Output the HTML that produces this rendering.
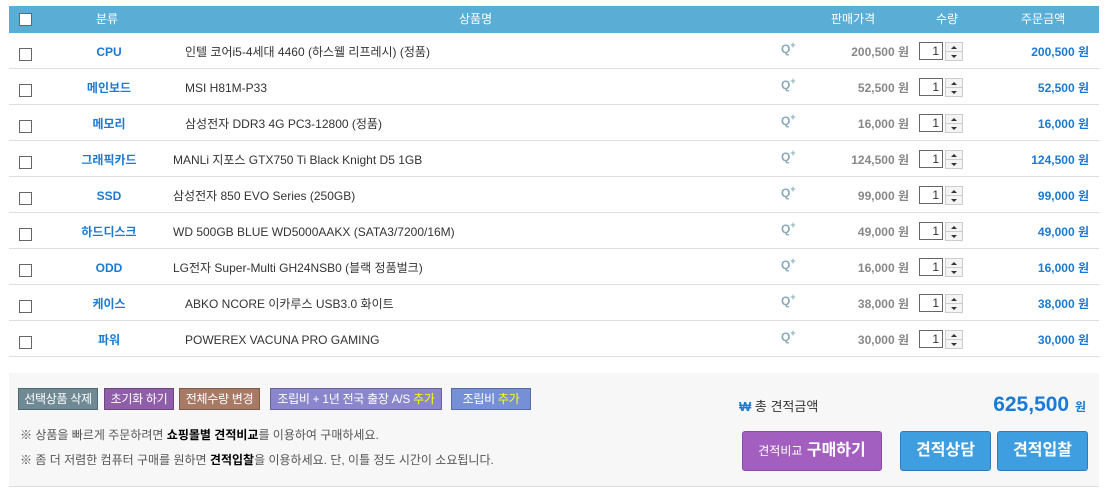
<!DOCTYPE html>
<html><head><meta charset="utf-8"><style>
*{margin:0;padding:0;box-sizing:border-box}
body{width:1105px;height:490px;background:#fff;font-family:"Liberation Sans","Noto Sans CJK KR",sans-serif;font-size:12px;line-height:14px;color:#333;position:relative;overflow:hidden}
.hd{position:absolute;left:9px;top:6px;width:1090px;height:27px;background:#5aaed6;color:#fff;font-size:12px}
.hd span{position:absolute;top:6px;line-height:14px}
.cb{position:absolute;width:13px;height:13px;border:1px solid #666;background:#fff}
.row{position:absolute;left:9px;width:1090px;height:36px;border-bottom:1px solid #ddd}
.row>*{position:absolute;top:12px;line-height:14px;white-space:nowrap}
.cat{color:#1a7ad4;font-weight:bold;width:120px;text-align:center;left:40px}
.nm{color:#333}
.q{left:772px;top:9px!important;color:#8ab;font-weight:bold;font-size:12px}
.q sup{font-size:9px;line-height:0}
.pr{right:190px;color:#888;font-weight:bold}
.tot{right:10px;color:#1a7ad4;font-weight:bold}
.in{left:910px;top:9px!important;width:24px;height:18px;border:1px solid #666;text-align:right;padding-right:3px;font-size:12px;line-height:16px!important}
.sp{left:936px;top:9px!important;width:18px;height:19px;border:1px solid #ccc;background:#f4f4f4}
.sp:before{content:"";position:absolute;left:5px;top:3px;border:3px solid transparent;border-bottom:3px solid #333;border-top:0}
.sp:after{content:"";position:absolute;left:5px;top:12px;border:3px solid transparent;border-top:3px solid #333;border-bottom:0}
.sp i{position:absolute;left:0;top:8px;width:16px;height:1px;background:#ccc}
.panel{position:absolute;left:9px;top:373px;width:1090px;height:114px;background:#f7f7f7;border-bottom:1px solid #ddd}
.btn{position:absolute;top:388px;height:22px;color:#fff;font-size:12px;line-height:20px;text-align:center;border:1px solid rgba(0,0,0,.25);white-space:nowrap;letter-spacing:-0.3px}
.y{color:#ff0}
.note{position:absolute;left:20px;color:#555;font-size:12px;white-space:nowrap}
.note b{color:#000}
.bb{position:absolute;top:431px;height:40px;color:#fff;font-weight:bold;font-size:16px;line-height:38px;text-align:center;border-radius:3px}
</style></head><body>
<div class="hd">
<div class="cb" style="left:10px;top:7px"></div>
<span style="left:87px">분류</span><span style="left:450px">상품명</span>
<span style="left:822px">판매가격</span><span style="left:927px">수량</span><span style="left:1012px">주문금액</span>
</div>

<div class="row" style="top:33px"><div class="cb" style="left:10px;top:15px"></div><div class="cat">CPU</div><div class="nm" style="left:176px">인텔 코어i5-4세대 4460 (하스웰 리프레시) (정품)</div><div class="q">Q<sup>+</sup></div><div class="pr">200,500 원</div><div class="in">1</div><div class="sp"><i></i></div><div class="tot">200,500 원</div></div>
<div class="row" style="top:69px"><div class="cb" style="left:10px;top:15px"></div><div class="cat">메인보드</div><div class="nm" style="left:176px">MSI H81M-P33</div><div class="q">Q<sup>+</sup></div><div class="pr">52,500 원</div><div class="in">1</div><div class="sp"><i></i></div><div class="tot">52,500 원</div></div>
<div class="row" style="top:105px"><div class="cb" style="left:10px;top:15px"></div><div class="cat">메모리</div><div class="nm" style="left:176px">삼성전자 DDR3 4G PC3-12800 (정품)</div><div class="q">Q<sup>+</sup></div><div class="pr">16,000 원</div><div class="in">1</div><div class="sp"><i></i></div><div class="tot">16,000 원</div></div>
<div class="row" style="top:141px"><div class="cb" style="left:10px;top:15px"></div><div class="cat">그래픽카드</div><div class="nm" style="left:164px">MANLi 지포스 GTX750 Ti Black Knight D5 1GB</div><div class="q">Q<sup>+</sup></div><div class="pr">124,500 원</div><div class="in">1</div><div class="sp"><i></i></div><div class="tot">124,500 원</div></div>
<div class="row" style="top:177px"><div class="cb" style="left:10px;top:15px"></div><div class="cat">SSD</div><div class="nm" style="left:164px">삼성전자 850 EVO Series (250GB)</div><div class="q">Q<sup>+</sup></div><div class="pr">99,000 원</div><div class="in">1</div><div class="sp"><i></i></div><div class="tot">99,000 원</div></div>
<div class="row" style="top:213px"><div class="cb" style="left:10px;top:15px"></div><div class="cat">하드디스크</div><div class="nm" style="left:164px">WD 500GB BLUE WD5000AAKX (SATA3/7200/16M)</div><div class="q">Q<sup>+</sup></div><div class="pr">49,000 원</div><div class="in">1</div><div class="sp"><i></i></div><div class="tot">49,000 원</div></div>
<div class="row" style="top:249px"><div class="cb" style="left:10px;top:15px"></div><div class="cat">ODD</div><div class="nm" style="left:164px">LG전자 Super-Multi GH24NSB0 (블랙 정품벌크)</div><div class="q">Q<sup>+</sup></div><div class="pr">16,000 원</div><div class="in">1</div><div class="sp"><i></i></div><div class="tot">16,000 원</div></div>
<div class="row" style="top:285px"><div class="cb" style="left:10px;top:15px"></div><div class="cat">케이스</div><div class="nm" style="left:176px">ABKO NCORE 이카루스 USB3.0 화이트</div><div class="q">Q<sup>+</sup></div><div class="pr">38,000 원</div><div class="in">1</div><div class="sp"><i></i></div><div class="tot">38,000 원</div></div>
<div class="row" style="top:321px"><div class="cb" style="left:10px;top:15px"></div><div class="cat">파워</div><div class="nm" style="left:176px">POWEREX VACUNA PRO GAMING</div><div class="q">Q<sup>+</sup></div><div class="pr">30,000 원</div><div class="in">1</div><div class="sp"><i></i></div><div class="tot">30,000 원</div></div>

<div class="panel"></div>
<div class="btn" style="left:18px;width:80px;background:#6f8a94">선택상품 삭제</div>
<div class="btn" style="left:104px;width:70px;background:#8e5fa8">초기화 하기</div>
<div class="btn" style="left:179px;width:81px;background:#a77a66">전체수량 변경</div>
<div class="btn" style="left:270px;width:172px;background:#8a86cc">조립비 + 1년 전국 출장 A/S <span class="y">추가</span></div>
<div class="btn" style="left:451px;width:80px;background:#7690d8">조립비 <span class="y">추가</span></div>
<div class="note" style="top:428px">※ 상품을 빠르게 주문하려면 <b>쇼핑몰별 견적비교</b>를 이용하여 구매하세요.</div>
<div class="note" style="top:453px">※ 좀 더 저렴한 컴퓨터 구매를 원하면 <b>견적입찰</b>을 이용하세요. 단, 이틀 정도 시간이 소요됩니다.</div>

<div style="position:absolute;left:739px;top:399px;font-size:13px;line-height:16px;color:#333"><b style="color:#1a7ad4">₩</b> 총 견적금액</div>
<div style="position:absolute;right:19px;top:393px;color:#1a7ad4;font-weight:bold;font-size:21px;line-height:24px">625,500 <span style="font-size:12px">원</span></div>
<div class="bb" style="left:742px;width:140px;background:#a35fc0;border:1px solid #8a4aa8"><span style="font-size:12px;font-weight:normal">견적비교</span> 구매하기</div>
<div class="bb" style="left:900px;width:91px;background:#3e9ee0;border:1px solid #2a7cbd">견적상담</div>
<div class="bb" style="left:997px;width:91px;background:#3e9ee0;border:1px solid #2a7cbd">견적입찰</div>
</body></html>
